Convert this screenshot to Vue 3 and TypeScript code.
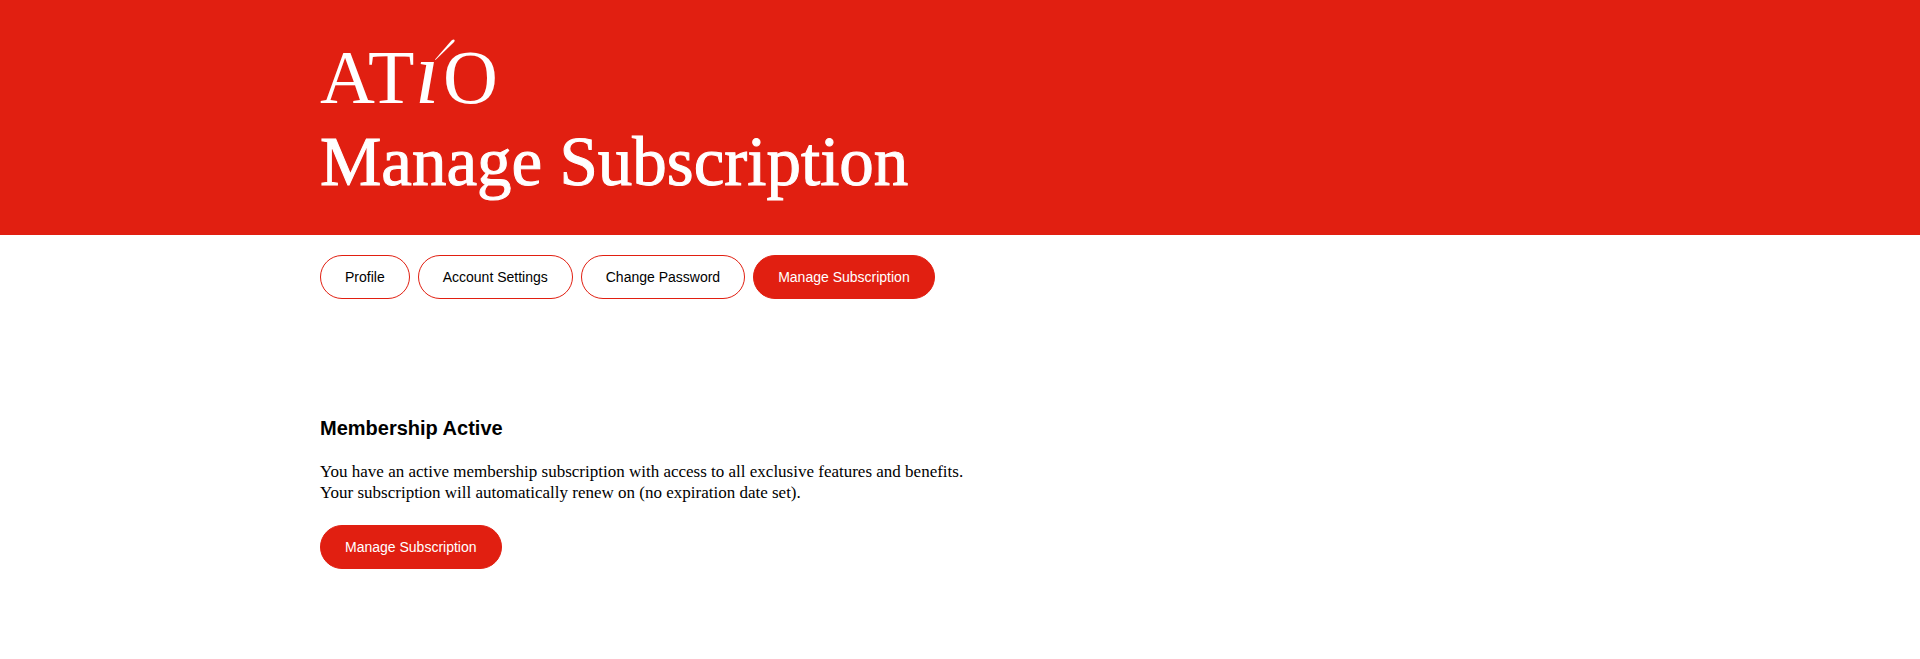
<script setup lang="ts">
import { ref } from 'vue'

interface Tab {
  label: string
  href: string
}

const tabs: Tab[] = [
  { label: 'Profile', href: '#profile' },
  { label: 'Account Settings', href: '#account-settings' },
  { label: 'Change Password', href: '#change-password' },
  { label: 'Manage Subscription', href: '#manage-subscription' },
]

const current = ref('#manage-subscription')
</script>

<template>
  <header class="banner">
    <div class="container">
      <a class="logo" href="#home" aria-label="ATiO">
        <svg width="180" height="72" viewBox="0 0 180 72" fill="#fff">
          <text class="logo-text" y="66"><tspan x="0 48">AT</tspan><tspan class="slanted" x="95">ı</tspan><tspan x="123">O</tspan></text>
          <path d="M115 22.5 L131.5 3.6 Q133.6 1.8 134.6 2.9 Q135 3.9 133.6 5.4 L115.5 22.9 Z" />
        </svg>
      </a>
      <h1 class="title">Manage Subscription</h1>
    </div>
  </header>

  <main class="container">
    <nav class="tabs" aria-label="Account">
      <a
        v-for="tab in tabs"
        :key="tab.href"
        class="pill"
        :class="{ filled: tab.href === current }"
        :href="tab.href"
        :aria-current="tab.href === current ? 'page' : undefined"
        @click="current = tab.href"
      >{{ tab.label }}</a>
    </nav>

    <section class="membership">
      <h2 class="heading">Membership Active</h2>
      <p class="copy">
        You have an active membership subscription with access to all exclusive features and benefits.<br />
        Your subscription will automatically renew on (no expiration date set).
      </p>
      <button class="pill filled" type="button">Manage Subscription</button>
    </section>
  </main>
</template>

<style>
body {
  margin: 0;
  background: #fff;
}
</style>

<style scoped>
.container {
  box-sizing: border-box;
  width: 100%;
  max-width: 1328px;
  margin: 0 auto;
  padding: 0 24px;
}

.banner {
  padding: 37px 0 33px;
  background: #e11f11;
  color: #fff;
}

.logo {
  display: block;
  width: 180px;
  height: 72px;
}

.logo svg {
  display: block;
  overflow: visible;
}

.logo-text {
  font-family: "Liberation Serif", serif;
  font-size: 76px;
}

.slanted {
  font-size: 88px;
  font-style: italic;
}

.title {
  margin: 13px 0 0;
  font-family: "Liberation Serif", serif;
  font-size: 69px;
  font-weight: 400;
  line-height: 80px;
  -webkit-text-stroke: 1px currentColor;
}

.tabs {
  display: flex;
  flex-wrap: wrap;
  gap: 8px;
  padding-top: 20px;
}

.pill {
  box-sizing: border-box;
  display: inline-block;
  padding: 11px 24px;
  border: 1px solid #e11f11;
  border-radius: 24px;
  background: #fff;
  color: #000;
  font-family: "Liberation Sans", sans-serif;
  font-size: 14px;
  line-height: 20px;
  text-decoration: none;
  white-space: nowrap;
  cursor: pointer;
}

.pill.filled {
  background: #e11f11;
  color: #fff;
}

.membership {
  padding: 116px 0 64px;
}

.heading {
  margin: 0 0 20px;
  font-family: "Liberation Sans", sans-serif;
  font-size: 20px;
  font-weight: 700;
  line-height: 26px;
}

.copy {
  margin: 0 0 22px;
  font-family: "Liberation Serif", serif;
  font-size: 17px;
  line-height: 21px;
}
</style>
